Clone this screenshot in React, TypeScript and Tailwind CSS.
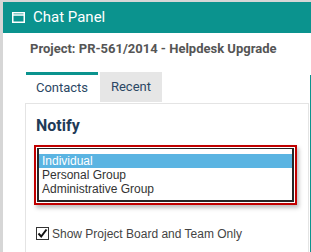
export default function App() {
  return (
    <div className="w-[311px] h-[252px] overflow-hidden bg-[#d6d6d6] pt-[2px] pl-[3px]">
      <div className="relative h-full bg-white">
        <div className="flex h-[31px] items-center gap-[8px] bg-[#0b938e] pl-[9px] text-white">
          <svg width="13" height="11" viewBox="0 0 13 11" fill="none" stroke="white" strokeWidth="1.5">
            <rect x="0.75" y="0.75" width="11.5" height="9.5" />
            <line x1="0.75" y1="3" x2="12.25" y2="3" strokeWidth="1.5" />
          </svg>
          <span className="font-['Roboto'] text-[15px]">Chat Panel</span>
        </div>
        <div className="absolute right-[0px] top-[73px] h-[200px] w-[1px] bg-[#0b938e]" />
        <div className="pl-[27px] pt-[6px] font-['Roboto'] text-[13px] font-bold text-[#555]">
          Project: PR-561/2014 - Helpdesk Upgrade
        </div>
        <div className="mt-[13px] flex pl-[23px] font-['Roboto'] text-[13px] text-[#2b4764]">
          <div className="flex h-[30px] w-[72px] items-end justify-center border-t-[3px] border-[#0b938e] pb-[4px]">
            Contacts
          </div>
          <div className="ml-[2px] flex h-[30px] w-[62px] items-center justify-center bg-[#e6e6e6]">
            Recent
          </div>
        </div>
        <div className="ml-[22px] mr-[2px] mt-[1px] h-[200px] border border-[#e4e4e4] pl-[10px] pt-[10px]">
          <div className="font-['Roboto'] text-[16px] font-bold text-[#1f3b58]">Notify</div>
          <div className="-ml-[2px] mt-[7px] w-[263px] border-2 border-[#c00000] p-[1px] shadow-[2px_3px_4px_rgba(0,0,0,0.25)]">
            <div className="border-x-[2px] border-b-[2px] border-t border-[#262626] pt-[5px] pb-[4px] font-['Liberation_Sans'] text-[12px] leading-[14px] text-[#333]">
              <div className="bg-[#5ab4e2] pl-[3px] text-white">Individual</div>
              <div className="pl-[3px]">Personal Group</div>
              <div className="pl-[3px]">Administrative Group</div>
            </div>
          </div>
          <label className="mt-[20px] flex items-center gap-[3px] font-['Liberation_Sans'] text-[12px] text-[#444]">
            <span className="flex h-[13px] w-[13px] items-center justify-center border border-[#333] bg-white">
              <svg width="11" height="11" viewBox="0 0 11 11" fill="none" stroke="#111" strokeWidth="2">
                <path d="M1.5 5.5 L4.2 8.5 L9.5 1.5" />
              </svg>
            </span>
            Show Project Board and Team Only
          </label>
        </div>
      </div>
    </div>
  );
}
